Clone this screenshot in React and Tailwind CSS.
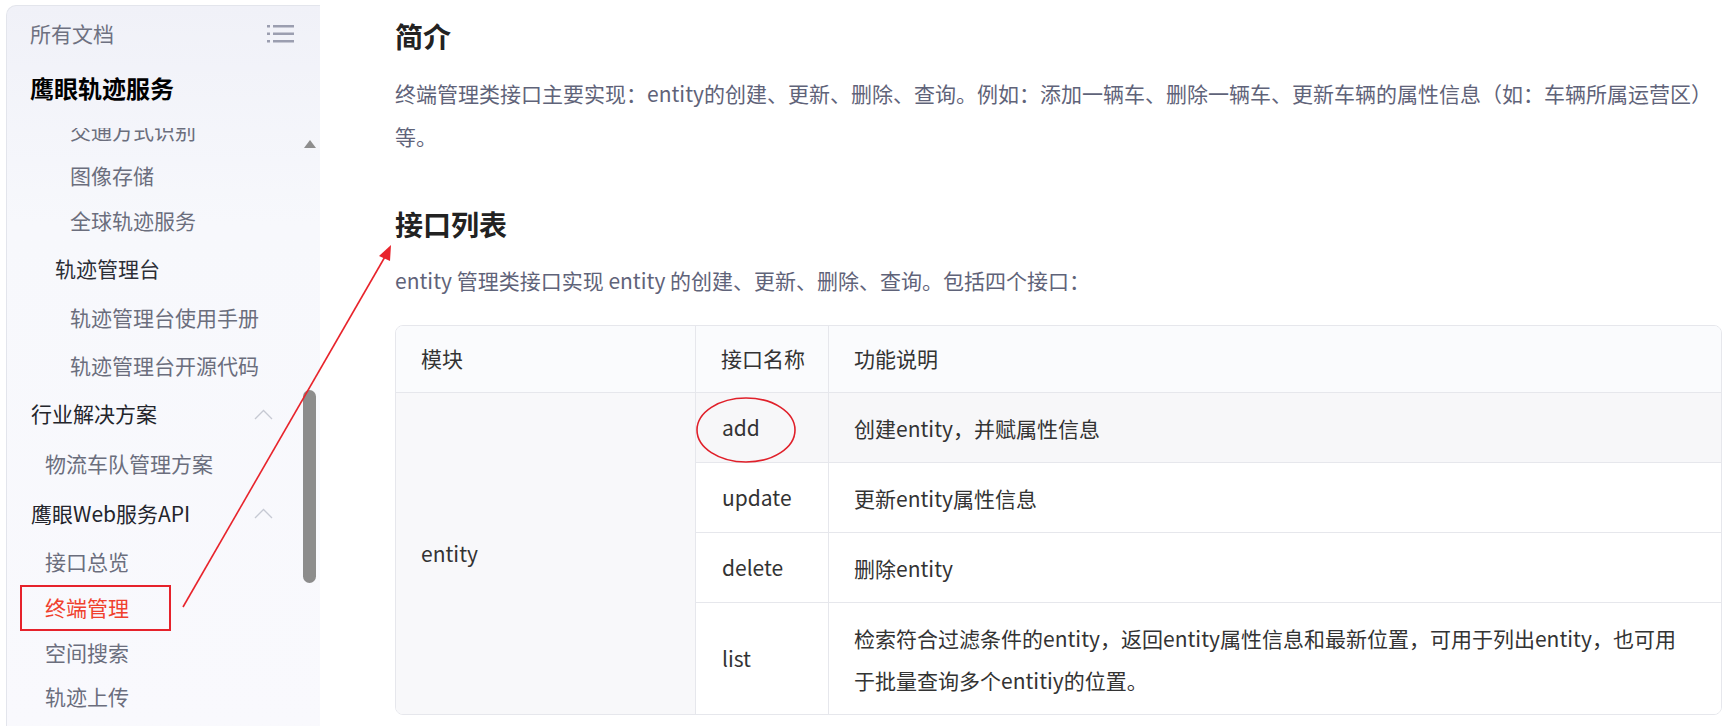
import React from 'react';

const FONT = { fontFamily: '"Noto Sans CJK SC", "Noto Sans", sans-serif' };

// 侧栏条目：文本、层级缩进、行高、颜色
const navItems = [
  { text: '交通方式识别', cls: 'h-[45px] pl-[63px] text-[#6b6e7d]' },
  { text: '图像存储', cls: 'h-[45px] pl-[63px] text-[#6b6e7d]' },
  { text: '全球轨迹服务', cls: 'h-[46px] pl-[63px] text-[#6b6e7d]' },
  { text: '轨迹管理台', cls: 'h-[50px] pl-[48px] text-[#2c2e36]' },
  { text: '轨迹管理台使用手册', cls: 'h-[48px] pl-[63px] text-[#6b6e7d]' },
  { text: '轨迹管理台开源代码', cls: 'h-[47px] pl-[63px] text-[#6b6e7d]' },
  { text: '行业解决方案', cls: 'h-[50px] pl-[24px] text-[#23252c]', group: true },
  { text: '物流车队管理方案', cls: 'h-[50px] pl-[38px] text-[#6b6e7d]' },
  { text: '鹰眼Web服务API', cls: 'h-[49px] pl-[24px] text-[#23252c]', group: true },
  { text: '接口总览', cls: 'h-[47px] pl-[38px] text-[#6b6e7d]' },
  { text: '终端管理', active: true },
  { text: '空间搜索', cls: 'h-[44px] pl-[38px] text-[#6b6e7d]' },
  { text: '轨迹上传', cls: 'h-[44px] pl-[38px] text-[#6b6e7d]' },
];

function ChevronUp() {
  return (
    <svg width="19" height="11" viewBox="0 0 19 11" fill="none">
      <path d="M1 10 L9.5 1.5 L18 10" stroke="#c6c9d3" strokeWidth="1.3" />
    </svg>
  );
}

function MenuIcon() {
  return (
    <svg width="27" height="18" viewBox="0 0 27 18" fill="#9b9eb0">
      <rect x="0" y="0" width="3" height="2.5" />
      <rect x="6" y="0" width="21" height="2.5" />
      <rect x="0" y="7.5" width="3" height="2.5" />
      <rect x="6" y="7.5" width="21" height="2.5" />
      <rect x="0" y="15" width="3" height="2.5" />
      <rect x="6" y="15" width="21" height="2.5" />
    </svg>
  );
}

function Sidebar() {
  return (
    <aside className="w-[320px] shrink-0 pl-[6px] pt-[5px]">
      <div className="flex h-[721px] flex-col rounded-tl-[10px] border-l border-t border-[#e3e5ec] bg-gradient-to-b from-[#f0f1f8] via-[#f7f8fc] via-30% to-[#f9f9fd] text-[21px]">
        <div className="mt-[8px] flex h-[40px] items-center justify-between pl-[23px] pr-[26px]">
          <span className="text-[#6e7181]">所有文档</span>
          <MenuIcon />
        </div>
        <div className="mt-[14px] flex h-[40px] items-center pl-[23px] text-[24px] font-bold text-black">
          鹰眼轨迹服务
        </div>

        {/* 可滚动的目录区，已向下滚动一段 */}
        <div className="mt-[20px] flex min-h-0 flex-1 overflow-hidden">
          <div className="flex-1">
            <div className="-mt-[20px]">
              {navItems.map((it) =>
                it.active ? (
                  <div key={it.text} className="flex h-[46px] items-center">
                    <span className="ml-[13px] flex h-[46px] w-[151px] items-center border-2 border-[#e6222b] pl-[23px] text-[#f0412e]">
                      {it.text}
                    </span>
                  </div>
                ) : (
                  <div key={it.text} className={`flex items-center justify-between pr-[30px] ${it.cls}`}>
                    <span className="whitespace-nowrap">{it.text}</span>
                    {it.group && <ChevronUp />}
                  </div>
                )
              )}
            </div>
          </div>
          <div className="mr-[4px] flex w-[13px] flex-col items-center">
            <div className="mt-[12px] h-0 w-0 border-x-[6px] border-b-[8px] border-x-transparent border-b-[#8e8e8e]" />
            <div className="mt-[242px] h-[193px] w-[13px] rounded-full bg-[#8c8c8c]" />
          </div>
        </div>
      </div>
    </aside>
  );
}

function ApiTable() {
  const rows = [
    { name: 'add', desc: '创建entity，并赋属性信息', h: 'h-[70px] border-b', hover: true },
    { name: 'update', desc: '更新entity属性信息', h: 'h-[70px] border-b' },
    { name: 'delete', desc: '删除entity', h: 'h-[70px] border-b' },
    {
      name: 'list',
      desc: '检索符合过滤条件的entity，返回entity属性信息和最新位置，可用于列出entity，也可用于批量查询多个entitiy的位置。',
      h: 'h-[111px]',
    },
  ];

  return (
    <div className="mt-[23px] overflow-hidden rounded-[8px] border border-[#e6e7ec] text-[21px] text-[#333]">
      <div className="flex h-[67px] border-b border-[#e6e7ec] bg-[#fafbfd]">
        <div className="flex w-[300px] items-center border-r border-[#e6e7ec] pl-[25px]">模块</div>
        <div className="flex w-[133px] items-center border-r border-[#e6e7ec] pl-[25px]">接口名称</div>
        <div className="flex flex-1 items-center pl-[25px]">功能说明</div>
      </div>
      <div className="flex">
        <div className="flex w-[300px] items-center border-r border-[#e6e7ec] bg-[#f8f8fa] pl-[25px]">entity</div>
        <div className="flex-1">
          {rows.map((r) => (
            <div key={r.name} className={`flex border-[#e6e7ec] ${r.h} ${r.hover ? 'bg-[#f7f7f9]' : 'bg-white'}`}>
              <div className="flex w-[133px] items-center border-r border-[#e6e7ec] pl-[26px]">{r.name}</div>
              <div className="flex flex-1 items-center pl-[25px] pr-[26px] leading-[42px]">{r.desc}</div>
            </div>
          ))}
        </div>
      </div>
    </div>
  );
}

export default function App() {
  return (
    <div style={FONT} className="relative flex h-[726px] w-[1730px] overflow-hidden bg-white">
      <Sidebar />

      <main className="flex-1 pl-[75px] pr-[8px]">
        <h2 className="mt-[16px] h-[40px] text-[28px] font-bold leading-[40px] text-[#222]">简介</h2>
        <p className="mt-[16px] text-[21px] leading-[43px] text-[#5f6379]">
          终端管理类接口主要实现：entity的创建、更新、删除、查询。例如：添加一辆车、删除一辆车、更新车辆的属性信息（如：车辆所属运营区）等。
        </p>
        <h2 className="mt-[46px] h-[40px] text-[28px] font-bold leading-[40px] text-[#222]">接口列表</h2>
        <p className="mt-[15px] text-[21px] leading-[43px] text-[#5f6379]">
          entity 管理类接口实现 entity 的创建、更新、删除、查询。包括四个接口：
        </p>
        <ApiTable />
      </main>

      {/* 标注：红色箭头与椭圆 */}
      <svg className="pointer-events-none absolute left-0 top-0" width="1730" height="726">
        <line x1="183" y1="607" x2="386" y2="255" stroke="#e8242c" strokeWidth="1.6" />
        <polygon points="391,245 379,256 390,261" fill="#e8242c" />
        <ellipse cx="746" cy="430" rx="49" ry="32" fill="none" stroke="#e0202a" strokeWidth="1.6" />
      </svg>
    </div>
  );
}
